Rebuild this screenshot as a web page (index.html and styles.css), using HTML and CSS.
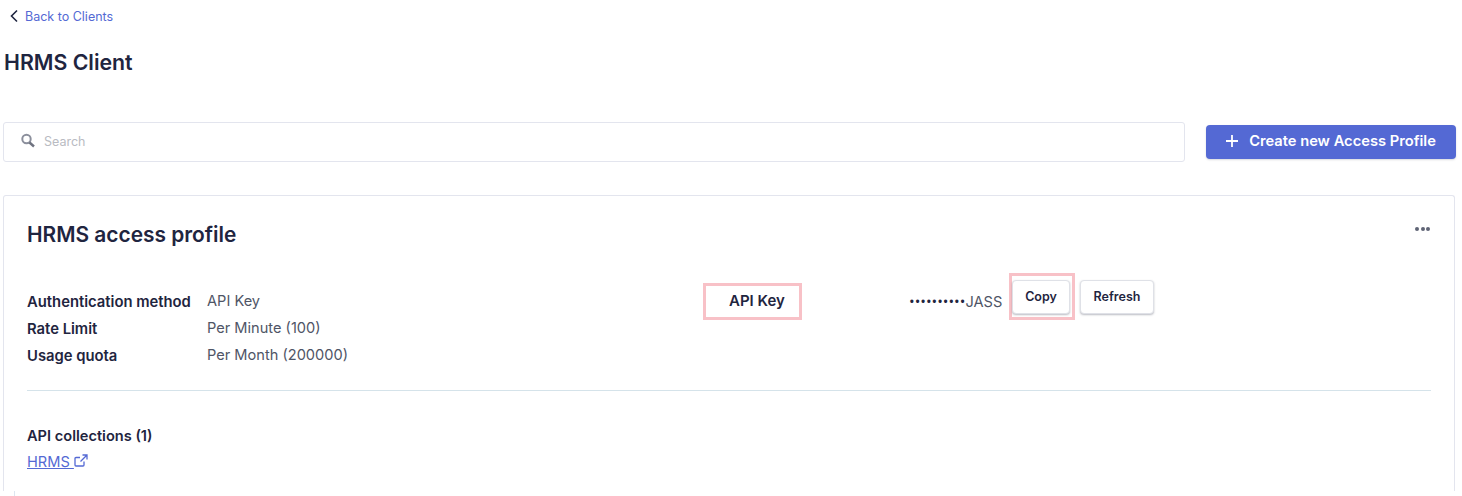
FILE: index.html
```html
<!DOCTYPE html>
<html lang="en">
<head>
    <meta charset="UTF-8">
    <title>HRMS Client</title>
    <link rel="stylesheet" href="styles.css">
</head>
<body>
    <div class="page">
        <a class="back-link" href="#">
            <svg width="10" height="14" viewBox="0 0 10 14"><path d="M8 1.500L2.500 7L8 12.500" fill="none" stroke="#1f2540" stroke-width="1.600"/></svg>
            Back to Clients
        </a>
        <h1 class="title">HRMS Client</h1>
        <div class="toolbar">
            <div class="search">
                <svg width="16" height="16" viewBox="0 0 16 16"><circle cx="6.500" cy="6" r="4.200" fill="none" stroke="#8b8f9c" stroke-width="2"/><path d="M9.500 9.500L14 13.500" stroke="#6f7380" stroke-width="2.400"/></svg>
                <span>Search</span>
            </div>
            <button class="create-btn">
                <svg width="12" height="12" viewBox="0 0 12 12"><path d="M6 0V12M0 6H12" stroke="#fff" stroke-width="1.800"/></svg>
                Create new Access Profile
            </button>
        </div>
        <div class="card">
            <div class="card-head">
                <h2>HRMS access profile</h2>
                <div class="dots"><i></i><i></i><i></i></div>
            </div>
            <div class="details">
                <dl class="info">
                    <dt>Authentication method</dt><dd>API Key</dd>
                    <dt>Rate Limit</dt><dd>Per Minute (100)</dd>
                    <dt>Usage quota</dt><dd>Per Month (200000)</dd>
                </dl>
                <div class="key-row">
                    <div class="key-label">API Key</div>
                    <div class="key-value"><span class="key-dots">••••••••••</span>JASS</div>
                    <div class="copy-mark"><button class="small-btn copy-btn">Copy</button></div>
                    <button class="small-btn refresh-btn">Refresh</button>
                </div>
            </div>
            <div class="collections">
                <h3>API collections (1)</h3>
                <a href="#">HRMS <svg width="14" height="13" viewBox="0 0 14 13"><path d="M10 7.500V11a1 1 0 0 1-1 1H2a1 1 0 0 1-1-1V4.500a1 1 0 0 1 1-1h4M8.500 1H13V5.500M13 1L6.500 7.500" fill="none" stroke="#5469d4" stroke-width="1.300"/></svg></a>
            </div>
        </div>
        <div class="next-edge"></div>
    </div>
</body>
</html>
```

FILE: styles.css
```css
html, body {
    margin: 0;
    padding: 0;
    background: #fff;
}
body {
    font-family: Inter, "Liberation Sans", sans-serif;
    font-size: 14.600px;
    color: #1f2540;
    overflow: hidden;
}
.page {
    padding: 6px 6px 0 3px;
}
.back-link {
    display: flex;
    align-items: center;
    gap: 6px;
    height: 20px;
    padding-left: 6px;
    font-size: 12.500px;
    color: #5469d4;
    text-decoration: none;
}
.title {
    margin: 23px 0 0 1px;
    font-size: 21.300px;
    line-height: 26px;
    font-weight: 600;
}
.toolbar {
    display: flex;
    align-items: center;
    justify-content: space-between;
    margin-top: 47px;
}
.search {
    display: flex;
    align-items: center;
    gap: 8px;
    box-sizing: border-box;
    width: 1182px;
    height: 40px;
    padding: 0 0 2px 16px;
    border: 1px solid #e3e5ee;
    border-radius: 3px;
    font-size: 12.500px;
    color: #b9bbc2;
}
.create-btn {
    display: flex;
    align-items: center;
    justify-content: center;
    gap: 11px;
    width: 250px;
    height: 34px;
    padding: 0 0 2px;
    border: 0;
    border-radius: 4px;
    background: #5469d4;
    box-shadow: 0 1px 2px rgba(60, 66, 87, 0.2);
    color: #fff;
    font: 600 14.700px Inter, sans-serif;
}
.card {
    box-sizing: border-box;
    width: 1452px;
    height: 296px;
    margin-top: 33px;
    padding: 0 23px;
    border: 1px solid #e3e5ee;
    border-bottom: 0;
    border-radius: 3px 3px 0 0;
}
.card-head {
    display: flex;
    justify-content: space-between;
    padding-top: 25px;
}
.card-head h2 {
    margin: 0;
    font-size: 20.900px;
    line-height: 28px;
    font-weight: 600;
}
.dots {
    display: flex;
    gap: 1.500px;
    padding: 6px 1px 0 0;
}
.dots i {
    width: 4px;
    height: 4px;
    border-radius: 50%;
    background: #5f6475;
}
.details {
    display: flex;
    height: 117px;
    margin-top: 24px;
    border-bottom: 1px solid #d5e3ea;
}
.info {
    display: grid;
    grid-template-columns: 180px auto;
    grid-auto-rows: 27px;
    width: 676px;
    margin: 16px 0 0;
    align-content: start;
}
.info dt {
    font-size: 14.800px;
    font-weight: 600;
    line-height: 27px;
}
.info dd {
    margin: 0;
    line-height: 24px;
    color: #4f5566;
}
.key-row {
    display: flex;
    align-items: flex-start;
}
.key-label {
    box-sizing: border-box;
    width: 99px;
    height: 37px;
    margin: 10px 107px 0 0;
    padding-left: 23px;
    border: 3px solid #f8c1c7;
    font-size: 15px;
    font-weight: 600;
    line-height: 30px;
}
.key-value {
    width: 100px;
    padding-top: 18px;
    color: #4f5566;
    white-space: nowrap;
}
.key-dots {
    font-family: "Open Sans", sans-serif;
    font-size: 15px;
    color: #1f2540;
}
.copy-mark {
    box-sizing: border-box;
    display: flex;
    width: 66px;
    height: 47px;
    margin-right: 5px;
    padding-top: 4px;
    border: 3px solid #f8c1c7;
}
.small-btn {
    box-sizing: border-box;
    height: 34px;
    padding: 0 0 2px;
    border: 1px solid #dfe1e7;
    border-radius: 4px;
    background: #fff;
    box-shadow: 0 1px 2px rgba(60, 66, 87, 0.35);
    color: #1f2540;
    font: 600 12.500px Inter, sans-serif;
}
.copy-btn {
    width: 58px;
}
.refresh-btn {
    width: 74px;
    margin-top: 7px;
}
.collections {
    padding-top: 33px;
}
.collections h3 {
    margin: 0;
    font-size: 14.600px;
    line-height: 24px;
    font-weight: 600;
}
.collections a {
    display: inline-block;
    margin-top: 5px;
    color: #5469d4;
}
.next-edge {
    width: 0;
    height: 5px;
    margin-left: 11px;
    border-left: 1px solid #dde6f0;
}
```
